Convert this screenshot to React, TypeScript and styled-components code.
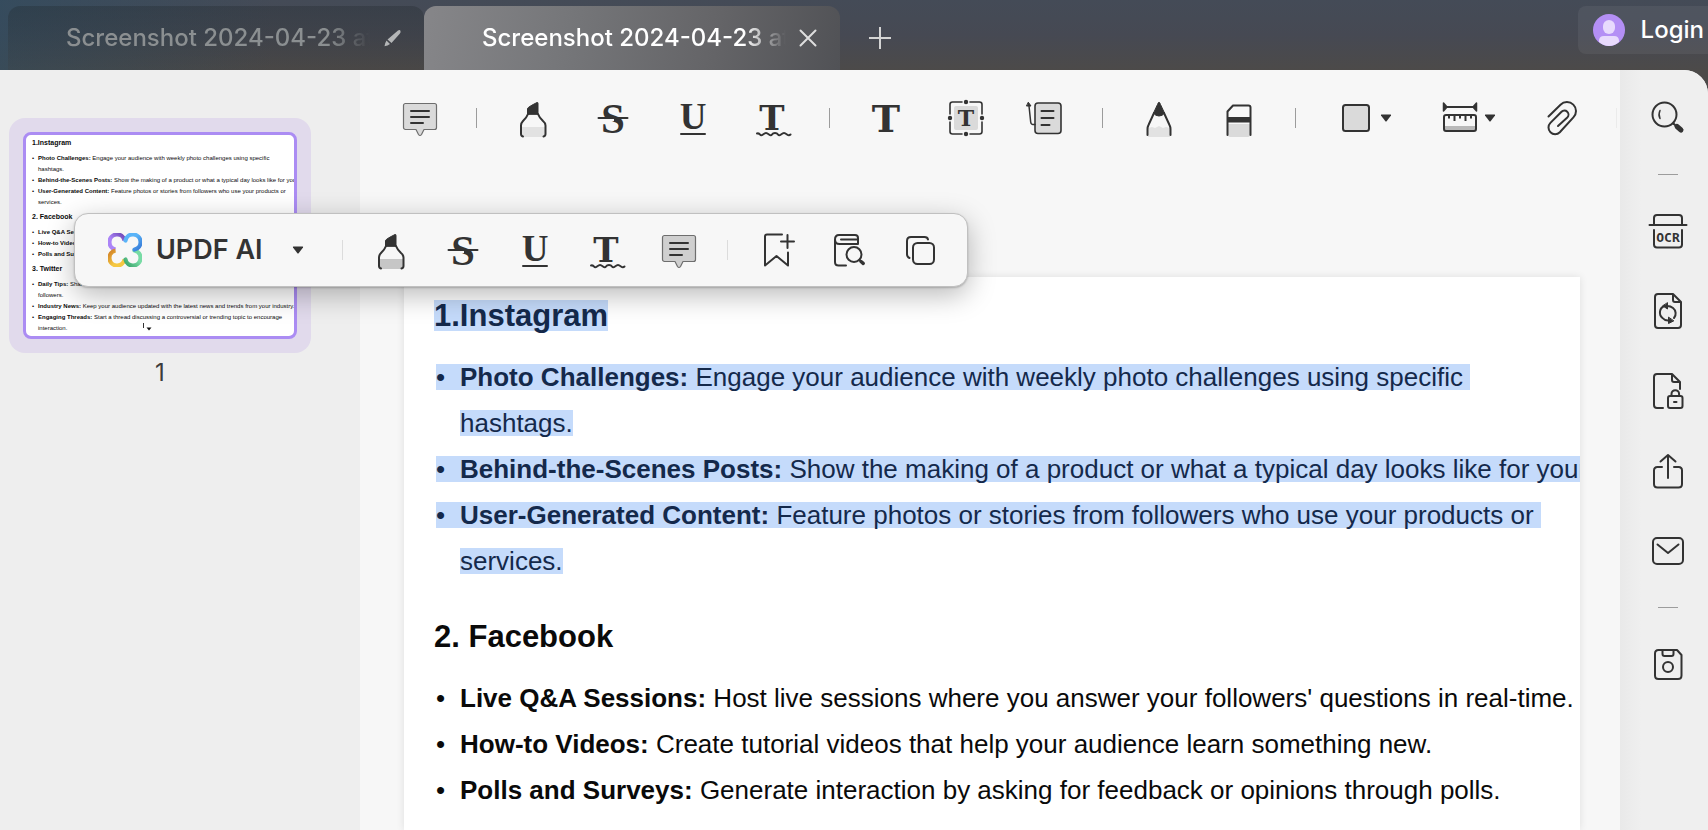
import React from 'react';
import styled, { createGlobalStyle, css } from 'styled-components';

const INK = '#333333';
const UI_FONT = 'Inter, "Liberation Sans", sans-serif';
const DOC_FONT = '"Liberation Sans", Arial, sans-serif';

const GlobalStyle = createGlobalStyle`
  *, *::before, *::after { box-sizing: border-box; }
  html, body { margin: 0; height: 100%; overflow: hidden; }
  #root { height: 100%; }
  body { font-family: ${UI_FONT}; background: #4c4a49; }
  button { font: inherit; color: inherit; background: none; border: 0; padding: 0; margin: 0; cursor: pointer; }
  svg { display: block; }
`;

/* ---------- window frame ---------- */

const Window = styled.div`
  position: relative;
  display: flex;
  flex-direction: column;
  height: 100vh;
  overflow: hidden;
  background: #4c4a49;
`;

const TitleBar = styled.header`
  flex: none;
  display: flex;
  align-items: flex-end;
  height: 70px;
  padding-left: 8px;
  background:
    linear-gradient(90deg, rgba(44, 76, 98, 0.6), rgba(44, 76, 98, 0) 16%),
    linear-gradient(180deg, #444b57 0%, #464953 50%, #4c4a49 100%);
`;

const Tab = styled.div<{ $active?: boolean }>`
  display: flex;
  align-items: center;
  width: 416px;
  height: 64px;
  padding: 0 20px 0 58px;
  border-radius: 12px 12px 0 0;
  color: ${p => (p.$active ? '#ffffff' : '#8b8f91')};
  background: ${p =>
    p.$active
      ? 'linear-gradient(100deg, #868689 0%, #757679 35%, #646467 70%, #515256 100%)'
      : 'linear-gradient(180deg, rgba(30, 38, 42, 0.3), rgba(62, 60, 58, 0.2))'};
`;

const TabLabel = styled.button`
  width: 304px;
  overflow: hidden;
  white-space: nowrap;
  text-align: left;
  font-size: 24px;
  line-height: 32px;
  font-weight: 500;
  mask-image: linear-gradient(90deg, #000 86%, transparent 100%);
`;

const TabAction = styled.button`
  flex: none;
  width: 24px;
  height: 24px;
  margin-left: 10px;
`;

const NewTab = styled.button`
  width: 40px;
  height: 40px;
  margin: 0 0 12px 20px;
`;

const Login = styled.button`
  display: flex;
  align-items: center;
  gap: 16px;
  height: 48px;
  margin: 0 0 16px auto;
  padding: 0 4px 0 15px;
  border-radius: 8px 0 0 8px;
  background: rgba(255, 255, 255, 0.06);
  color: #fff;
  font-size: 24px;
  line-height: 32px;
  font-weight: 500;
`;

const Workspace = styled.div`
  flex: 1;
  min-height: 0;
  display: flex;
  border-top-right-radius: 24px;
  overflow: hidden;
  background: #f7f7f7;
`;

/* ---------- thumbnails ---------- */

const ThumbPanel = styled.aside`
  flex: none;
  width: 360px;
  padding: 48px 0 0 9px;
  background: #eeeeee;
`;

const ThumbFigure = styled.figure`
  display: flex;
  flex-direction: column;
  align-items: center;
  gap: 4px;
  width: 302px;
  margin: 0;
`;

const ThumbHalo = styled.div`
  width: 302px;
  padding: 14px;
  border-radius: 16px;
  background: #e1daec;
`;

const ThumbPage = styled.div`
  position: relative;
  height: 207px;
  border: 3px solid #ab8cf3;
  border-radius: 8px;
  background: #fff;
  overflow: hidden;
`;

const ThumbCursor = styled.svg`
  position: absolute;
  left: 116px;
  bottom: 4px;
`;

const ThumbCaption = styled.figcaption`
  font-size: 24px;
  line-height: 32px;
  color: #3c3c3c;
`;

/* ---------- document ---------- */

const Center = styled.main`
  flex: 1;
  min-width: 0;
  display: flex;
  flex-direction: column;
`;

const Toolbar = styled.div`
  flex: none;
  display: flex;
  align-items: center;
  gap: 36px;
  height: 96px;
  padding-left: 40px;
  overflow: hidden;
`;

const ToolGroup = styled.div<{ $gap?: number }>`
  flex: none;
  display: flex;
  gap: ${p => p.$gap ?? 40}px;
`;

const ToolButton = styled.button<{ $menu?: boolean }>`
  flex: none;
  display: flex;
  align-items: center;
  width: ${p => (p.$menu ? 64 : 40)}px;
  padding-left: ${p => (p.$menu ? 4 : 0)}px;
  height: 40px;
`;

const Separator = styled.span<{ $tone?: string }>`
  flex: none;
  width: 1px;
  height: 20px;
  background: ${p => p.$tone ?? '#9c9c9c'};
`;

const Canvas = styled.div`
  flex: 1;
  min-height: 0;
  display: flex;
  padding: 111px 40px 0 44px;
`;

const Page = styled.article`
  flex: 1;
  min-width: 0;
  padding: 23px 0 0 30px;
  overflow: hidden;
  background: #fff;
  box-shadow: 0 0 8px rgba(0, 0, 0, 0.1);
`;

const Doc = styled.div<{ $mini?: boolean }>`
  font-family: ${DOC_FONT};
  color: #0a0a0a;
  white-space: nowrap;
  ${p =>
    p.$mini
      ? css`
          --text: 6px; --line: 11px; --mark: 8px; --head: 7px; --head-line: 8px;
          --above: 6px; --below: 5px; --bullet: 6px; --inset: 0px;
          padding: 4px 0 0 6px;
        `
      : css`
          --text: 26px; --line: 46px; --mark: 26px; --head: 31px; --head-line: 31px;
          --above: 37px; --below: 23px; --bullet: 24px; --inset: 2px;
        `}
`;

const Heading = styled.h2`
  margin: var(--above) 0 var(--below);
  font-size: var(--head);
  line-height: var(--head-line);
  font-weight: 700;
  section:first-child > & { margin-top: 0; }
`;

const List = styled.ul`
  list-style: none;
  margin: 0;
  padding: 0 0 0 var(--inset);
  font-size: var(--text);
`;

const Line = styled.div<{ $continued?: boolean }>`
  display: flex;
  align-items: center;
  height: var(--line);
  padding-left: ${p => (p.$continued ? 'var(--bullet)' : '0')};
`;

const Run = styled.span<{ $selected?: boolean }>`
  display: inline-flex;
  line-height: var(--mark);
  white-space: pre;
  ${p =>
    p.$selected &&
    css`
      background: #c5dbfb;
      color: #14294b;
    `}
`;

const HeadingRun = styled(Run)`
  line-height: var(--head-line);
`;

const Bullet = styled.span`
  width: var(--bullet);
`;

/* ---------- right rail ---------- */

const Rail = styled.nav`
  flex: none;
  display: flex;
  flex-direction: column;
  align-items: center;
  gap: 36px;
  width: 88px;
  padding: 28px 0 0 8px;
  background: linear-gradient(90deg, #e9e9e9, #efefef 24%);
`;

const RailGroup = styled.div`
  display: flex;
  flex-direction: column;
  gap: 40px;
`;

const RailDivider = styled.span`
  width: 20px;
  height: 1px;
  background: #9c9c9c;
`;

/* ---------- selection popup ---------- */

const Popup = styled.div`
  position: absolute;
  left: 74px;
  top: 213px;
  display: flex;
  align-items: center;
  gap: 28px;
  height: 74px;
  padding: 0 27px 0 33px;
  border: 1px solid #c0c0c0;
  border-radius: 14px;
  background: #f7f7f7;
  box-shadow: 0 8px 28px rgba(0, 0, 0, 0.28), 0 1px 2px rgba(0, 0, 0, 0.2);
`;

const AiButton = styled.button`
  display: flex;
  align-items: center;
  width: 206px;
  padding-right: 10px;
  gap: 14px;
  color: ${INK};
  font-size: 27px;
  line-height: 34px;
  font-weight: 600;
  white-space: nowrap;
  & > svg:last-child { margin-left: auto; }
`;

/* ---------- icons ---------- */

const Icon = ({ children, sw = 2 }: { children: React.ReactNode; sw?: number }) => (
  <svg width="40" height="40" viewBox="0 0 40 40" fill="none" stroke={INK} strokeWidth={sw}
    strokeLinecap="round" strokeLinejoin="round" aria-hidden="true">
    {children}
  </svg>
);

const Glyph = ({ x = 20, y, size, narrow, children }: { x?: number; y: number; size: number; narrow?: boolean; children: string }) => (
  <text x={x} y={y} fontSize={size} fontWeight="700" textAnchor="middle" fill={INK} stroke="none"
    fontFamily={narrow ? '"Liberation Serif", serif' : '"DejaVu Serif", serif'}>{children}</text>
);

const Caret = ({ boxed = true }: { boxed?: boolean }) => (
  <svg width={boxed ? 20 : 12} height="8" viewBox={boxed ? '-4 0 20 8' : '0 0 12 8'} aria-hidden="true">
    <path d="M1.5 .5h9q1 0 .5 1L6.800 7q-.8 1-1.600 0L1 1.500q-.5-1 .5-1z" fill={INK} />
  </svg>
);

const Comment = ({ fill = '#dadada' }: { fill?: string }) => (
  <Icon>
    <path d="M5.500 5.500h29a2 2 0 0 1 2 2v22a2 2 0 0 1-2 2H24l-2.500 5q-1.500 2-3 0l-2.500-5H5.500a2 2 0 0 1-2-2v-22a2 2 0 0 1 2-2z" fill={fill} stroke="#6e6e6e" strokeWidth="1.200" />
    <path d="M11 13h18M11 19h18M11 25h12" />
  </Icon>
);

const Highlighter = ({ fill = '#e2e2e2' }: { fill?: string }) => (
  <Icon>
    <path d="M8 29h25v8q0 2-3 2H11q-3 0-3-2z" fill={fill} stroke="none" />
    <path d="M14.500 16v-5.500Q15 9 24 4.500q1-.3 1 1V16z" fill={INK} stroke={INK} strokeWidth="1" />
    <path d="M15 16q-1 3-5 7-2 2-2 4.500V36q0 2 2 2.500M25 16q1 3 5 7 2.500 2 2.500 4.500V36q0 2-2 2.500" />
  </Icon>
);

const Strike = () => (
  <Icon>
    <Glyph y={35} size={43} narrow>S</Glyph>
    <path d="M8 22h13" stroke="#f7f7f7" strokeWidth="2" strokeLinecap="butt" />
    <path d="M5.500 20h29" />
  </Icon>
);

const Underline = () => (
  <Icon>
    <Glyph y={31} size={37} narrow>U</Glyph>
    <path d="M8 36h24" />
  </Icon>
);

const Squiggle = () => (
  <Icon>
    <Glyph x={19} y={32} size={34}>T</Glyph>
    <path d="M4 35.500q2-.5 3 1t3 0 3-1.500 3 1.500 3 0 3-1.500 3 1.500 3 0 3-1.500 3 1.500 3.500 0" />
  </Icon>
);

const TextTool = () => <Icon><Glyph y={34} size={38}>T</Glyph></Icon>;

const TextBoxTool = () => (
  <Icon>
    <rect x="8" y="8" width="24" height="24" rx="2" fill="#dadada" stroke="none" />
    <Glyph y={28} size={22}>T</Glyph>
    <path d="M16 4H6.500Q4 4 4 6.500V16M24 4h9.500Q36 4 36 6.500V16M36 24v9.500q0 2.500-2.500 2.500H24M16 36H6.500Q4 36 4 33.500V24" strokeWidth="1.600" />
    <g fill={INK} stroke="none"><circle cx="20" cy="4" r="2.200" /><circle cx="20" cy="36" r="2.200" /><circle cx="4" cy="20" r="2.200" /><circle cx="36" cy="20" r="2.200" /></g>
  </Icon>
);

const Callout = () => (
  <Icon>
    <rect x="9" y="5" width="26" height="30.500" rx="3" fill="#dadada" strokeWidth="1.600" />
    <path d="M15.500 13h12M15.500 20h12M15.500 27h8" />
    <path d="M9 26.500H7q-2 0-2.300-2.500L3 8" strokeWidth="1.500" />
    <path d="M2.500 4.500 5 8H.8z" fill={INK} strokeWidth="1" />
  </Icon>
);

const Pencil = () => (
  <Icon>
    <path d="M9 30l4-1 3 1 4-2 4 2 3-1 4 1v9H9z" fill="#e2e2e2" stroke="none" />
    <path d="M20 4.500q1 0 1.500 2L25.500 15q-2 3-5.500 3t-5.500-3l4-8.500q.5-2 1.500-2z" fill={INK} strokeWidth="1" />
    <path d="M15 15L9.500 27Q8.500 29 8.500 31v6M25 15l5.500 12q1 2 1 4v6" />
  </Icon>
);

const Eraser = () => (
  <Icon>
    <path d="M9 26h22v11q0 2-3 2H12q-3 0-3-2z" fill="#dadada" stroke="none" />
    <path d="M8.500 37V13.500L14 7.500h15.500q2 0 2 2V37" />
    <rect x="8.500" y="19" width="23" height="5.500" fill={INK} stroke="none" />
  </Icon>
);

const Shape = () => <Icon><rect x="7" y="7" width="26" height="26" rx="2.500" fill="#dadada" /></Icon>;

const Ruler = () => (
  <Icon>
    <rect x="5" y="28" width="30" height="5" fill="#b8b8b8" stroke="none" />
    <rect x="4" y="17" width="32" height="16" rx="2" />
    <path d="M9 18v2.500M14.500 18v5M20 18v2.500M25.500 18v5M31 18v2.500" strokeLinecap="butt" />
    <path d="M5 9h30" />
    <path d="M3.500 5v8l3.500-4zM36.500 5v8L33 9z" fill={INK} strokeWidth="1.500" />
  </Icon>
);

const Clip = () => (
  <Icon>
    <path d="M8.500 18.500 20.500 6.700a9 9 0 0 1 12.900 12.700L19.800 34.200a6.600 6.600 0 0 1-9.400-9.300L21.500 13.800a4 4 0 0 1 5.800 5.700L18 28" />
  </Icon>
);

const Search = () => (
  <Icon>
    <circle cx="16.500" cy="16.500" r="12" />
    <path d="M12 12.500q-2 4 0 8" strokeWidth="1.500" />
    <path d="M25.500 25.500l3 3" />
    <path d="M29 28.500l4 3.500" strokeWidth="5" />
  </Icon>
);

const Ocr = () => (
  <Icon>
    <path d="M6 13V7q0-3 3-3h22q3 0 3 3v6M1.500 14h37M6 19v14.500q0 3 3 3h22q3 0 3-3V19" />
    <text x="20" y="31" fontSize="13" fontWeight="700" textAnchor="middle" fill={INK} stroke="none" fontFamily='"DejaVu Sans Mono", monospace'>OCR</text>
  </Icon>
);

const Convert = () => (
  <Icon>
    <path d="M10 3h15l8 8v23q0 3-3 3H10q-3 0-3-3V6q0-3 3-3zM25 3v6q0 2 2 2h6" />
    <path d="M14.500 27a7 7 0 0 1 2-12M20 29.500q-3.500 0-5.500-2.500M25 17a7 7 0 0 1 1 10M18 15q4-.5 7 2" />
    <path d="M19.500 12v6L15 15zM20.500 26.500v6L25.500 30z" fill={INK} strokeWidth="1" />
  </Icon>
);

const Lock = () => (
  <Icon>
    <path d="M15 37H9q-3 0-3-3V6q0-3 3-3h15l8 8v7M24 3v6q0 2 2 2h6" />
    <rect x="20" y="25" width="14.500" height="12" rx="2" />
    <path d="M23.500 24.500V23a3.800 3.800 0 0 1 7.600 0v1.500M26 31h2.500" />
  </Icon>
);

const Share = () => (
  <Icon>
    <path d="M14 16H9.500Q6 16 6 19.500V33q0 3.500 3.500 3.500h21q3.500 0 3.500-3.500V19.500Q34 16 30.500 16H26M20 27V4M12.500 10.500 20 4l7.500 6.500" />
  </Icon>
);

const Mail = () => (
  <Icon>
    <rect x="5" y="7" width="30" height="26" rx="4" />
    <path d="M9.500 13.500 20 22l10.500-8.500" />
  </Icon>
);

const Save = () => (
  <Icon>
    <path d="M10.500 6H29l4.500 5v20.500q0 3.500-3.500 3.500H10.500Q7 35 7 31.500v-22Q7 6 10.500 6zM14.500 6v4q0 2 2 2h7q2 0 2-2V6" />
    <circle cx="20" cy="23" r="5" />
  </Icon>
);

const BookmarkAdd = () => (
  <Icon>
    <path d="M26 4.500H11q-2 0-2 2V35.500l11.500-9.500L32 35.500V22.500M31.500 5v13M25 11.500h13" />
  </Icon>
);

const BookSearch = () => (
  <Icon>
    <path d="M18 35.500h-7.500q-3.500 0-3.500-3.500V9.500Q7 5 11 5h16q3 0 3 3v6H11.500Q7 14 7 9.500M29 9.500H13" />
    <circle cx="26" cy="24.500" r="7.500" fill="#f7f7f7" />
    <path d="M31.500 30l1 1" />
    <path d="M33 31.500l2.200 1.800" strokeWidth="3.500" />
  </Icon>
);

const Copy = () => (
  <Icon>
    <rect x="13" y="13" width="21" height="21" rx="4.500" />
    <path d="M28 9.500Q27.500 7 24.500 7H11Q7 7 7 11v13q0 3 2.500 4" />
  </Icon>
);

const AiLogo = () => (
  <svg width="34" height="34" viewBox="0 0 34 34" fill="none" strokeWidth="4.200" aria-hidden="true">
    <defs>
      <linearGradient id="lv" x1="0" y1="1" x2="1" y2="0"><stop offset=".4" stopColor="#ab84f7" /><stop offset="1" stopColor="#6c45b4" /></linearGradient>
      <linearGradient id="lb" x1="0" y1="0" x2="1" y2="1"><stop offset=".4" stopColor="#5ab4f8" /><stop offset="1" stopColor="#3578d6" /></linearGradient>
      <linearGradient id="lg" x1="1" y1="0" x2="0" y2="1"><stop offset=".4" stopColor="#78dba5" /><stop offset="1" stopColor="#37a268" /></linearGradient>
      <linearGradient id="ly" x1="1" y1="1" x2="0" y2="0"><stop offset=".4" stopColor="#f5c842" /><stop offset="1" stopColor="#d07f25" /></linearGradient>
    </defs>
    <path d="M16.500 7.500A7.600 7.600 0 1 0 7.500 16.500" stroke="url(#lv)" />
    <path d="M7.500 17.500A7.600 7.600 0 1 0 16.500 26.500" stroke="url(#ly)" />
    <path d="M17.500 26.500A7.600 7.600 0 1 0 26.500 17.500" stroke="url(#lg)" strokeLinecap="round" />
    <path d="M26.500 16.500A7.600 7.600 0 1 0 17.500 7.500" stroke="url(#lb)" strokeLinecap="round" />
  </svg>
);

const Avatar = () => (
  <svg width="32" height="32" viewBox="0 0 32 32" aria-hidden="true">
    <circle cx="16" cy="16" r="16" fill="#b48ff5" />
    <rect x="10" y="6" width="12" height="14" rx="6" fill="#e8dafd" />
    <path d="M6 28v-1q0-5 5-5h10q5 0 5 5v1q-4.500 4-10 4T6 28z" fill="#e8dafd" />
  </svg>
);

/* ---------- content ---------- */

interface Item { label: string; text: string; more?: string }
interface Section { title: string; selected?: boolean; items: Item[] }

const sections: Section[] = [
  {
    title: '1.Instagram',
    selected: true,
    items: [
      { label: 'Photo Challenges:', text: 'Engage your audience with weekly photo challenges using specific', more: 'hashtags.' },
      { label: 'Behind-the-Scenes Posts:', text: 'Show the making of a product or what a typical day looks like for your' },
      { label: 'User-Generated Content:', text: 'Feature photos or stories from followers who use your products or', more: 'services.' },
    ],
  },
  {
    title: '2. Facebook',
    items: [
      { label: 'Live Q&A Sessions:', text: "Host live sessions where you answer your followers' questions in real-time." },
      { label: 'How-to Videos:', text: 'Create tutorial videos that help your audience learn something new.' },
      { label: 'Polls and Surveys:', text: 'Generate interaction by asking for feedback or opinions through polls.' },
    ],
  },
  {
    title: '3. Twitter',
    items: [
      { label: 'Daily Tips:', text: 'Share quick tips related to your niche, which can provide immediate value to your', more: 'followers.' },
      { label: 'Industry News:', text: 'Keep your audience updated with the latest news and trends from your industry.' },
      { label: 'Engaging Threads:', text: 'Start a thread discussing a controversial or trending topic to encourage', more: 'interaction.' },
    ],
  },
];

const DocumentText = ({ mini, data }: { mini?: boolean; data: Section[] }) => (
  <Doc $mini={mini}>
    {data.map(section => {
      const selected = !mini && section.selected;
      return (
        <section key={section.title}>
          <Heading><HeadingRun $selected={selected}>{section.title}</HeadingRun></Heading>
          <List>
            {section.items.map(item => (
              <li key={item.label}>
                <Line>
                  <Run $selected={selected}>
                    <Bullet>•</Bullet>
                    <strong>{item.label}</strong>
                    <span>{` ${item.text}${selected ? ' ' : ''}`}</span>
                  </Run>
                </Line>
                {item.more && <Line $continued><Run $selected={selected}>{item.more}</Run></Line>}
              </li>
            ))}
          </List>
        </section>
      );
    })}
  </Doc>
);

const Tool = ({ name, menu, children }: { name: string; menu?: boolean; children: React.ReactNode }) => (
  <ToolButton type="button" aria-label={name} $menu={menu}>
    {children}
    {menu && <Caret />}
  </ToolButton>
);

export default function App() {
  return (
    <>
      <GlobalStyle />
      <Window>
        <TitleBar>
          <Tab>
            <TabLabel type="button">Screenshot 2024-04-23 at</TabLabel>
            <TabAction type="button" aria-label="Edited">
              <svg width="24" height="24" viewBox="0 0 24 24" fill="#b4b6b7" aria-hidden="true">
                <path d="M18 4.500q2-1 2.500.5t-1 3L11.500 17l-4-3.500zM6.500 14.500l3.500 3.500-2.500 1.500-3 .8.700-3z" />
              </svg>
            </TabAction>
          </Tab>
          <Tab $active>
            <TabLabel type="button">Screenshot 2024-04-23 at</TabLabel>
            <TabAction type="button" aria-label="Close tab">
              <svg width="24" height="24" viewBox="0 0 24 24" stroke="#dedede" strokeWidth="2" strokeLinecap="round" aria-hidden="true">
                <path d="M4.500 4.500l15 15M19.500 4.500l-15 15" />
              </svg>
            </TabAction>
          </Tab>
          <NewTab type="button" aria-label="New tab">
            <svg width="40" height="40" viewBox="0 0 40 40" stroke="#d4d4d4" strokeWidth="2" aria-hidden="true">
              <path d="M20 9v22M9 20h22" />
            </svg>
          </NewTab>
          <Login type="button"><Avatar />Login</Login>
        </TitleBar>

        <Workspace>
          <ThumbPanel>
            <ThumbFigure>
              <ThumbHalo>
                <ThumbPage>
                  <DocumentText mini data={sections} />
                  <ThumbCursor width="14" height="10" viewBox="0 0 14 10" aria-hidden="true">
                    <path d="M1.500 1v5" stroke="#333" />
                    <path d="M4.500 5.500h5L7 8.500z" fill="#111" />
                  </ThumbCursor>
                </ThumbPage>
              </ThumbHalo>
              <ThumbCaption>1</ThumbCaption>
            </ThumbFigure>
          </ThumbPanel>

          <Center>
            <Toolbar role="toolbar" aria-label="Annotations">
              <Tool name="Note"><Comment /></Tool>
              <Separator />
              <ToolGroup>
                <Tool name="Highlight"><Highlighter /></Tool>
                <Tool name="Strikethrough"><Strike /></Tool>
                <Tool name="Underline"><Underline /></Tool>
                <Tool name="Squiggly line"><Squiggle /></Tool>
              </ToolGroup>
              <Separator />
              <ToolGroup>
                <Tool name="Text"><TextTool /></Tool>
                <Tool name="Text box"><TextBoxTool /></Tool>
                <Tool name="Callout"><Callout /></Tool>
              </ToolGroup>
              <Separator />
              <ToolGroup>
                <Tool name="Pencil"><Pencil /></Tool>
                <Tool name="Eraser"><Eraser /></Tool>
              </ToolGroup>
              <Separator />
              <ToolGroup>
                <Tool name="Shapes" menu><Shape /></Tool>
                <Tool name="Measure" menu><Ruler /></Tool>
                <Tool name="Attachment"><Clip /></Tool>
              </ToolGroup>
              <Separator $tone="#ebebeb" />
            </Toolbar>
            <Canvas>
              <Page><DocumentText data={sections} /></Page>
            </Canvas>
          </Center>

          <Rail aria-label="Tools">
            <RailGroup><Tool name="Search"><Search /></Tool></RailGroup>
            <RailDivider />
            <RailGroup>
              <Tool name="OCR"><Ocr /></Tool>
              <Tool name="Convert"><Convert /></Tool>
              <Tool name="Protect"><Lock /></Tool>
              <Tool name="Share"><Share /></Tool>
              <Tool name="Email"><Mail /></Tool>
            </RailGroup>
            <RailDivider />
            <RailGroup><Tool name="Save"><Save /></Tool></RailGroup>
          </Rail>
        </Workspace>

        <Popup role="toolbar" aria-label="Selection">
          <AiButton type="button"><AiLogo />UPDF AI<Caret boxed={false} /></AiButton>
          <Separator $tone="#dcdcdc" />
          <ToolGroup $gap={32}>
            <Tool name="Highlight selection"><Highlighter fill="#c6c6c6" /></Tool>
            <Tool name="Strike selection"><Strike /></Tool>
            <Tool name="Underline selection"><Underline /></Tool>
            <Tool name="Squiggle selection"><Squiggle /></Tool>
            <Tool name="Note on selection"><Comment fill="#cfcfcf" /></Tool>
          </ToolGroup>
          <Separator $tone="#dcdcdc" />
          <ToolGroup $gap={32}>
            <Tool name="Add bookmark"><BookmarkAdd /></Tool>
            <Tool name="Look up"><BookSearch /></Tool>
            <Tool name="Copy"><Copy /></Tool>
          </ToolGroup>
        </Popup>
      </Window>
    </>
  );
}
